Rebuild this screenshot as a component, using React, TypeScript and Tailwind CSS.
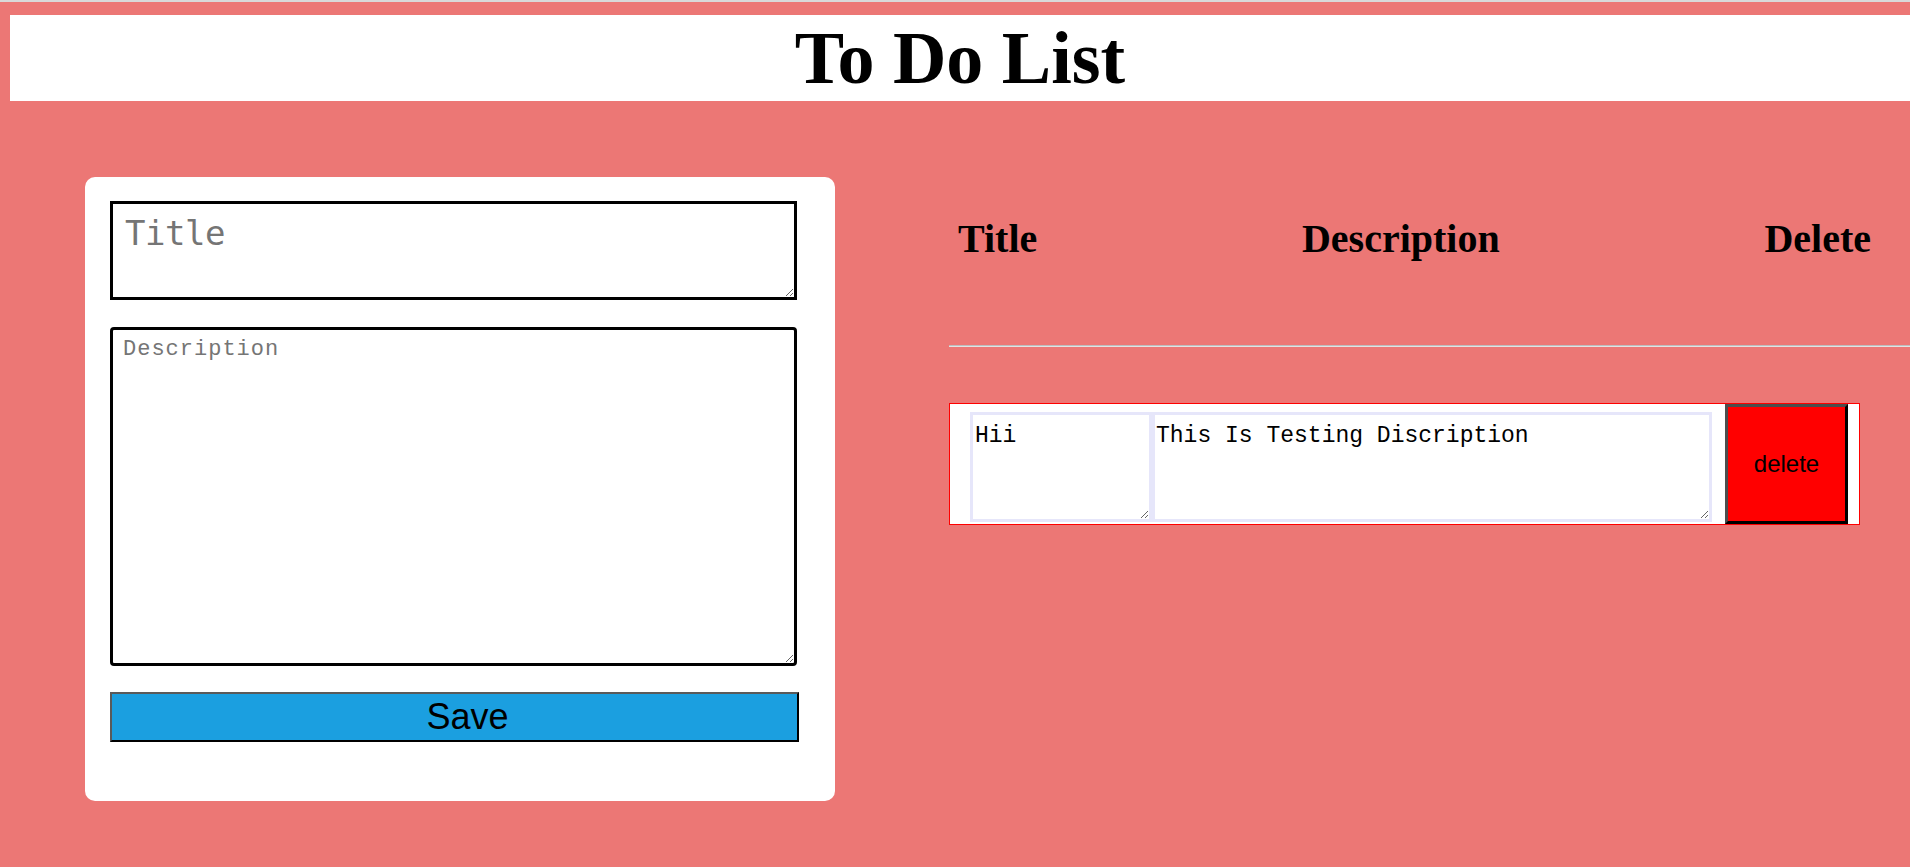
import React from "react";

const App = () => {
  const todos = [{ id: 1, title: "Hii", desc: "This Is Testing Discription" }];

  return (
    <div className="min-h-screen w-full bg-[#ec7775] font-['Liberation_Serif',serif]">
      <div className="h-[2px] bg-[#d9d9d9]"></div>
      {/* header */}
      <div className="pl-[10px] pt-[13px]">
        <div className="h-[86px] bg-white flex justify-center">
          <h1 className="text-[74px] leading-[86px] font-bold text-black">To Do List</h1>
        </div>
      </div>

      <div className="flex pl-[85px] pt-[76px]">
        {/* form card */}
        <div className="w-[750px] h-[624px] bg-white rounded-[10px] pl-[25px] pt-[24px] flex flex-col shrink-0">
          <textarea
            placeholder="Title"
            className="w-[687px] h-[99px] border-[3px] border-black bg-white px-[12px] pt-[4px] text-[34px] font-['DejaVu_Sans_Mono',monospace] tracking-[-0.5px] text-black placeholder:text-[#757575] outline-none resize"
          ></textarea>
          <textarea
            placeholder="Description"
            className="w-[687px] h-[339px] mt-[27px] border-[3px] border-black rounded-[4px] bg-white px-[10px] pt-[3px] text-[22px] tracking-[1px] font-['Liberation_Mono',monospace] text-black placeholder:text-[#757575] outline-none resize"
          ></textarea>
          <button className="w-[689px] h-[50px] mt-[26px] pl-[26px] bg-[#1b9fe0] border-2 border-t-[#5a5a5a] border-l-[#5a5a5a] border-r-black border-b-black text-[36px] leading-none font-['Liberation_Sans',Arial,sans-serif] text-black">
            Save
          </button>
        </div>

        {/* list */}
        <div className="flex-1 ml-[114px] pt-[39px]">
          <div className="flex justify-between pl-[9px] pr-[39px] text-[40px] leading-[46px] font-bold text-black">
            <span>Title</span>
            <span>Description</span>
            <span>Delete</span>
          </div>
          <div className="mt-[83px] h-[2px] bg-[#e2e2e2] border-t border-[#bdbdbd]"></div>

          {todos.map((t) => (
            <div
              key={t.id}
              className="mt-[56px] w-[911px] h-[122px] border border-[#ff0000] bg-white flex items-start pl-[20px]"
            >
              <textarea
                defaultValue={t.title}
                className="mt-[8px] w-[182px] h-[110px] border-[3px] border-[#e6e6fa] px-[2px] pt-[4px] text-[23px] font-['Liberation_Mono',monospace] text-black outline-none resize"
              ></textarea>
              <textarea
                defaultValue={t.desc}
                className="mt-[8px] w-[560px] h-[110px] border-[3px] border-[#e6e6fa] px-[1px] pt-[4px] text-[23px] font-['Liberation_Mono',monospace] text-black outline-none resize"
              ></textarea>
              <button className="ml-[13px] w-[123px] h-[120px] bg-[#ff0000] border-[3px] border-t-[#4d4d4d] border-l-[#4d4d4d] border-r-black border-b-black text-[24px] font-['Liberation_Sans',Arial,sans-serif] text-black">
                delete
              </button>
            </div>
          ))}
        </div>
      </div>
    </div>
  );
};

export default App;
